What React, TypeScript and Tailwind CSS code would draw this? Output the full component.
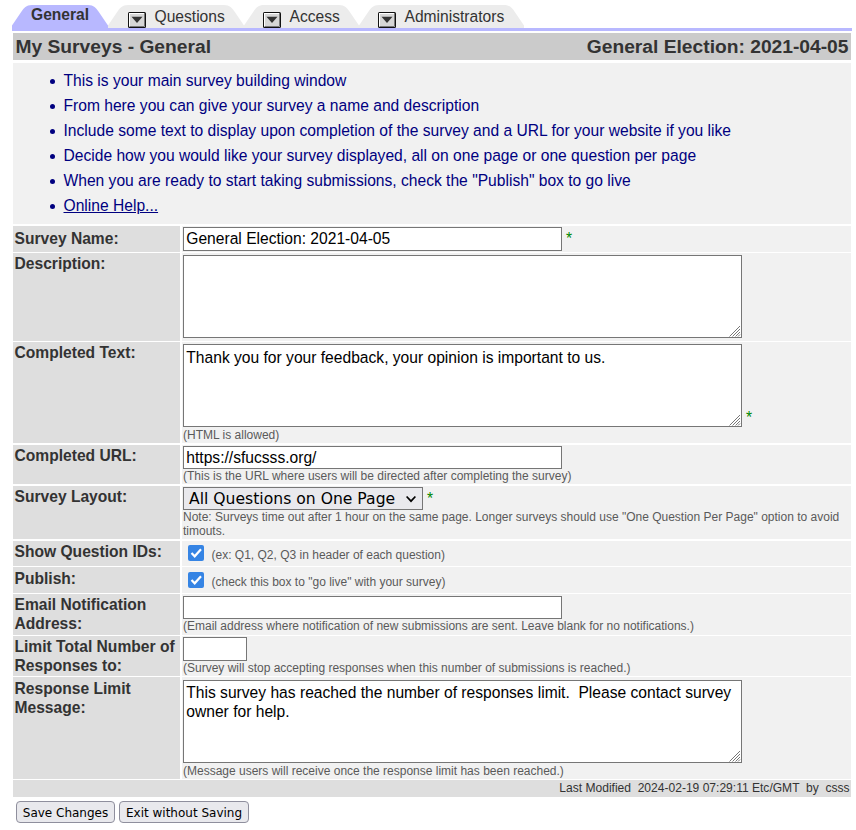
import React from "react";

const helpLines = [
  "This is your main survey building window",
  "From here you can give your survey a name and description",
  "Include some text to display upon completion of the survey and a URL for your website if you like",
  "Decide how you would like your survey displayed, all on one page or one question per page",
  'When you are ready to start taking submissions, check the "Publish" box to go live',
];

function MenuButton({ className }: { className: string }) {
  return (
    <svg width="18" height="16" viewBox="0 0 18 16" className={"shrink-0 " + className}>
      <rect x="0" y="0" width="18" height="16" rx="1.5" fill="#111" />
      <rect x="1" y="1" width="16" height="14" fill="#fff" />
      <path d="M1.500 14.5H16.5V1" stroke="#777" fill="none" />
      <rect x="2" y="2" width="14" height="12" fill="#d6d6d6" />
      <path d="M3.500 4.700H14.500L9 11Z" fill="#333" />
    </svg>
  );
}

function Tab({ width, label, box, active }: { width: number; label: string; box?: string; active?: boolean }) {
  return (
    <div className="relative flex h-[23px] shrink-0" style={{ width }}>
      <svg width={width} height="23" viewBox={`0 0 ${width} 23`} className="absolute inset-0">
        <path
          d={`M0 23V20.5L9.500 6.500C12 3 14 0 20 0H${width - 20}C${width - 14} 0 ${width - 12} 3 ${width - 9.5} 6.500L${width} 20.500V23Z`}
          fill={active ? "#b8b8ff" : "#ececec"}
        />
      </svg>
      {box && <MenuButton className={"relative mt-[7px] " + box} />}
      <span
        className={
          active
            ? "relative ml-[19px] text-[15.62px] leading-[19px] font-bold"
            : "relative ml-[8.500px] mt-[2px] text-[15.62px] leading-[19px]"
        }
      >
        {label}
      </span>
    </div>
  );
}

function Row({ label, size, pad, children }: { label: React.ReactNode; size: string; pad: string; children: React.ReactNode }) {
  return (
    <div className={"flex w-[838px] gap-[2px] " + size}>
      <div className={"w-[167px] shrink-0 bg-[#dedede] pl-[1.500px] text-[15.62px] leading-[19px] font-bold " + pad}>{label}</div>
      <div className="w-[669px] bg-[#f1f1f1] pl-px">{children}</div>
    </div>
  );
}

const Note = ({ children }: { children: React.ReactNode }) => (
  <div className="text-[12px] leading-[14px] text-[#5a5a5a]">{children}</div>
);

const Star = ({ className = "" }: { className?: string }) => (
  <span className={"ml-1 text-[15.62px] leading-[19px] text-[#008800] " + className}>*</span>
);

function TextInput({ value, size }: { value?: string; size: string }) {
  return (
    <input
      defaultValue={value}
      className={"block rounded-none border border-[#767676] bg-white px-[2.300px] text-[15.62px] leading-[19px] text-black outline-none " + size}
    />
  );
}

function TextArea({ value, pad = "pt-[2px]" }: { value?: string; pad?: string }) {
  return (
    <div className="relative h-[83px] w-[559px]">
      <textarea
        defaultValue={value}
        className={
          "block h-[83px] w-[559px] resize-none overflow-hidden border border-[#767676] bg-white px-[2.300px] text-[15.62px] leading-[19px] text-black outline-none " +
          pad
        }
      />
      <svg width="12" height="12" viewBox="0 0 12 12" className="absolute right-[1px] bottom-[1px]">
        <path d="M.5 11.500L11 1M3.500 11.500L11 4M6.500 11.500L11 7M9 11.500L11 9.500" stroke="#777" strokeWidth="1" />
      </svg>
    </div>
  );
}

function CheckLine({ note, pad }: { note: string; pad: string }) {
  return (
    <div className="flex pl-[5px]">
      <svg width="16" height="16" viewBox="0 0 16 16" className="shrink-0">
        <rect width="16" height="16" rx="2" fill="#3584e4" />
        <path d="M3.500 8L6.700 11.300L13 4.300" stroke="white" strokeWidth="2.200" fill="none" />
      </svg>
      <div className={"ml-[7.500px] " + pad}>
        <Note>{note}</Note>
      </div>
    </div>
  );
}

export default function App() {
  return (
    <div className="h-[830px] w-[856px] overflow-hidden bg-white pt-[5px] pl-3 font-['Liberation_Sans',Arial,sans-serif] text-[#333]">
      <div className="flex h-[26px] w-[840px] border-b-[3px] border-[#b8b8ff]">
        <Tab width={96} label="General" active />
        <Tab width={136} label="Questions" box="ml-[20px]" />
        <Tab width={115} label="Access" box="ml-[19px]" />
        <Tab width={165} label="Administrators" box="ml-[19px]" />
      </div>
      <div className="flex flex-col pl-px">
        <div className="mt-[2px] flex h-[27px] w-[838px] justify-between bg-[#cbcbcb] px-[2.500px] pt-[2px] text-[19.23px] leading-[23px] font-bold">
          <span>My Surveys - General</span>
          <span>General Election: 2021-04-05</span>
        </div>
        <ul className="mt-[3px] h-[161px] w-[838px] bg-[#f1f1f1] pt-[5px] pl-[37px] text-[15.62px] leading-[25px] text-[#000080]">
          {helpLines.map((l) => (
            <li key={l} className="flex items-center">
              <span className="mt-px mr-[8.500px] size-[5px] rounded-full bg-[#000080]" />
              {l}
            </li>
          ))}
          <li className="flex items-center">
            <span className="mt-px mr-[8.500px] size-[5px] rounded-full bg-[#000080]" />
            <a className="underline">Online Help...</a>
          </li>
        </ul>
        <Row label="Survey Name:" size="mt-[2px] h-[26px]" pad="pt-[3px]">
          <div className="flex pt-px">
            <TextInput value="General Election: 2021-04-05" size="h-6 w-[379px]" />
            <Star className="mt-[2px]" />
          </div>
        </Row>
        <Row label="Description:" size="mt-px h-[88px]" pad="pt-px">
          <div className="pt-[2px]"><TextArea /></div>
        </Row>
        <Row label="Completed Text:" size="mt-px h-[101px]" pad="pt-px">
          <div className="flex items-end pt-[2px] pb-px">
            <TextArea value="Thank you for your feedback, your opinion is important to us." pad="pt-[3px]" />
            <Star />
          </div>
          <Note>(HTML is allowed)</Note>
        </Row>
        <Row label="Completed URL:" size="mt-[2px] h-[39px]" pad="pt-px">
          <div className="pt-px"><TextInput value="https://sfucsss.org/" size="h-[23px] w-[379px]" /></div>
          <Note>(This is the URL where users will be directed after completing the survey)</Note>
        </Row>
        <Row label="Survey Layout:" size="mt-[2px] h-[53px]" pad="pt-px">
          <div className="flex pt-px">
            <div className="flex h-[23px] w-[240px] items-center justify-between border border-[#767676] bg-[#e9e9ed] pr-[6px] pl-[5px] font-['DejaVu_Sans',sans-serif] text-[15.62px] leading-[21px] text-black">
              <span className="pt-px whitespace-nowrap">All Questions on One Page</span>
              <svg width="10" height="8" viewBox="0 0 10 8"><path d="M.6 1.500L5 6.200L9.400 1.500" stroke="black" strokeWidth="1.700" fill="none" /></svg>
            </div>
            <Star className="mt-[2px]" />
          </div>
          <Note>Note: Surveys time out after 1 hour on the same page. Longer surveys should use "One Question Per Page" option to avoid timouts.</Note>
        </Row>
        <Row label="Show Question IDs:" size="mt-[2px] h-[25px]" pad="pt-px">
          <div className="pt-1"><CheckLine note="(ex: Q1, Q2, Q3 in header of each question)" pad="pt-[3px]" /></div>
        </Row>
        <Row label="Publish:" size="mt-px h-[26px]" pad="pt-[2px]">
          <div className="pt-[5px]"><CheckLine note={'(check this box to "go live" with your survey)'} pad="pt-[3px]" /></div>
        </Row>
        <Row label={<>Email Notification<br />Address:</>} size="mt-px h-[41px]" pad="pt-px">
          <div className="pt-[2px]"><TextInput size="h-[23px] w-[379px]" /></div>
          <Note>(Email address where notification of new submissions are sent. Leave blank for no notifications.)</Note>
        </Row>
        <Row label={<>Limit Total Number of<br />Responses to:</>} size="mt-px h-[40px]" pad="pt-px">
          <div className="pt-px"><TextInput size="h-6 w-16" /></div>
          <Note>(Survey will stop accepting responses when this number of submissions is reached.)</Note>
        </Row>
        <Row label={<>Response Limit<br />Message:</>} size="mt-px h-[102px]" pad="pt-[2px]">
          <div className="pt-[3px] pb-px">
            <TextArea value="This survey has reached the number of responses limit.  Please contact survey owner for help." />
          </div>
          <Note>(Message users will receive once the response limit has been reached.)</Note>
        </Row>
        <div className="mt-px h-[17px] w-[838px] bg-[#dedede] pt-px pr-[1.500px] text-right text-[12.05px] leading-[14px] whitespace-pre">
          {"Last Modified  2024-02-19 07:29:11 Etc/GMT  by  csss"}
        </div>
        <div className="mt-1 flex gap-1 pl-[3px] font-['DejaVu_Sans',sans-serif] text-[12px] text-black">
          <button className="h-[22px] w-[99px] rounded-[4px] border border-[#8f8f9d] bg-[#e9e9ed] pt-px leading-[20px] whitespace-nowrap">Save Changes</button>
          <button className="h-[22px] w-[130px] rounded-[4px] border border-[#8f8f9d] bg-[#e9e9ed] pt-px leading-[20px] whitespace-nowrap">Exit without Saving</button>
        </div>
      </div>
    </div>
  );
}
